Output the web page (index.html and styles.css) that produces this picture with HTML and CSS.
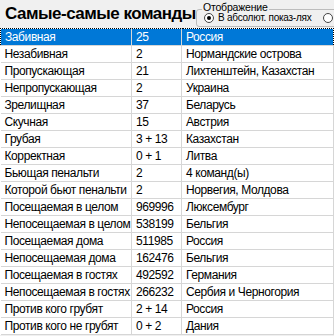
FILE: index.html
```html
<!DOCTYPE html>
<html lang="ru">
<head>
<meta charset="utf-8">
<link rel="stylesheet" href="styles.css">
</head>
<body>
<div class="app">
  <div class="header">
    <h1 class="title">Самые-самые команды</h1>
    <div class="group">
      <span class="legend">Отображение</span>
      <label class="radio"><span class="dot on"></span>В абсолют. показ-лях</label>
      <label class="radio"><span class="dot"></span>В относит.</label>
    </div>
  </div>
  <table class="grid">
    <colgroup><col class="c1"><col class="c2"><col class="c3"></colgroup>
    <tbody>
      <tr class="sel"><td>Забивная</td><td>25</td><td>Россия</td></tr>
      <tr><td>Незабивная</td><td>2</td><td>Нормандские острова</td></tr>
      <tr><td>Пропускающая</td><td>21</td><td>Лихтенштейн, Казахстан</td></tr>
      <tr><td>Непропускающая</td><td>2</td><td>Украина</td></tr>
      <tr><td>Зрелищная</td><td>37</td><td>Беларусь</td></tr>
      <tr><td>Скучная</td><td>15</td><td>Австрия</td></tr>
      <tr><td>Грубая</td><td>3 + 13</td><td>Казахстан</td></tr>
      <tr><td>Корректная</td><td>0 + 1</td><td>Литва</td></tr>
      <tr><td>Бьющая пенальти</td><td>2</td><td>4 команд(ы)</td></tr>
      <tr><td>Которой бьют пенальти</td><td>2</td><td>Норвегия, Молдова</td></tr>
      <tr><td>Посещаемая в целом</td><td>969996</td><td>Люксембург</td></tr>
      <tr><td>Непосещаемая в целом</td><td>538199</td><td>Бельгия</td></tr>
      <tr><td>Посещаемая дома</td><td>511985</td><td>Россия</td></tr>
      <tr><td>Непосещаемая дома</td><td>162476</td><td>Бельгия</td></tr>
      <tr><td>Посещаемая в гостях</td><td>492592</td><td>Германия</td></tr>
      <tr><td>Непосещаемая в гостях</td><td>266232</td><td>Сербия и Черногория</td></tr>
      <tr><td>Против кого грубят</td><td>2 + 14</td><td>Россия</td></tr>
      <tr><td>Против кого не грубят</td><td>0 + 2</td><td>Дания</td></tr>
    </tbody>
  </table>
</div>
</body>
</html>
```
FILE: styles.css
```css
html, body {
  margin: 0;
  padding: 0;
  background: #f0f0f0;
  overflow: hidden;
}
.app {
  width: 334px;
  height: 336px;
  overflow: hidden;
  font-family: "Liberation Sans", Arial, sans-serif;
}
.header {
  display: flex;
  align-items: flex-start;
  height: 28px;
  white-space: nowrap;
}
.title {
  margin: 4px 0 0 5px;
  font-size: 17px;
  letter-spacing: -0.5px;
  font-weight: bold;
  line-height: 20px;
  color: #000;
  width: 191px;
  flex: none;
  overflow: hidden;
}
.group {
  position: relative;
  flex: none;
  box-sizing: border-box;
  margin-top: 9px;
  height: 18px;
  padding: 2px 0 0 7px;
  border: 1px solid #bdbdbd;
  border-radius: 3px;
  display: flex;
  align-items: flex-start;
  gap: 12px;
  font-size: 10px;
  letter-spacing: -0.25px;
}
.legend {
  position: absolute;
  left: 5px;
  top: -9px;
  padding: 0 1px;
  background: #f0f0f0;
  font-size: 10.5px;
  letter-spacing: -0.2px;
  line-height: 12px;
  color: #000;
}
.radio {
  display: flex;
  align-items: center;
  gap: 4px;
  color: #000;
  line-height: 12px;
}
.dot {
  width: 10px;
  height: 10px;
  border-radius: 50%;
  border: 1px solid #444;
  box-sizing: border-box;
  background: #fff;
  display: inline-flex;
  align-items: center;
  justify-content: center;
}
.dot.on::after {
  content: "";
  width: 4px;
  height: 4px;
  border-radius: 50%;
  background: #000;
}
.grid {
  table-layout: fixed;
  border-collapse: collapse;
  width: 333px;
  background: #fff;
  font-size: 12px;
  letter-spacing: -0.4px;
}
.c1 { width: 131px; }
.c2 { width: 50px; }
.c3 { width: 152px; }
.grid td {
  height: 16px;
  padding: 0 0 0 4px;
  border: 1px solid #d6d6d6;
  white-space: nowrap;
  overflow: hidden;
  color: #000;
  line-height: 16px;
}
.grid td:first-child { border-left: none; }
.sel td {
  color: #fff;
  border-top: 1px dotted #000;
  border-bottom: 1px dotted #000;
  background: linear-gradient(#0078d7, #0078d7) padding-box, linear-gradient(#e39a50, #e39a50) border-box;
}
.sel td:first-child { border-left: 1px dotted #000; }
.sel td:last-child { border-right: 1px dotted #000; }
.sel td + td { border-left-color: #6cb0ea; }
```
